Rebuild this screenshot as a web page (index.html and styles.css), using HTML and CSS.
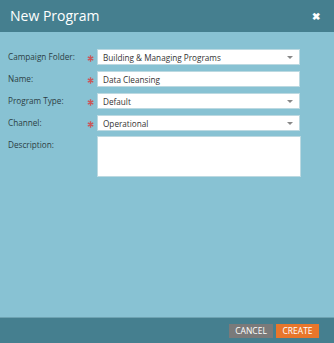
FILE: index.html
```html
<!DOCTYPE html>
<html>
<head>
<meta charset="utf-8">
<link rel="stylesheet" href="styles.css">
</head>
<body>
<div class="dialog">
  <div class="header">
    <span class="title">New Program</span>
    <span class="close">&#10006;</span>
  </div>
  <div class="body">
    <div class="form">
      <label class="label">Campaign Folder:</label>
      <span class="star"><svg width="7" height="7" viewBox="0 0 10 10"><path d="M5 0.5V9.5M1.1 2.75L8.9 7.25M1.1 7.25L8.9 2.75" stroke="#c9575a" stroke-width="2"/></svg></span>
      <div class="field select"><span>Building &amp; Managing Programs</span><span class="arrow"></span></div>

      <label class="label">Name:</label>
      <span class="star"><svg width="7" height="7" viewBox="0 0 10 10"><path d="M5 0.5V9.5M1.1 2.75L8.9 7.25M1.1 7.25L8.9 2.75" stroke="#c9575a" stroke-width="2"/></svg></span>
      <div class="field"><span>Data Cleansing</span></div>

      <label class="label">Program Type:</label>
      <span class="star"><svg width="7" height="7" viewBox="0 0 10 10"><path d="M5 0.5V9.5M1.1 2.75L8.9 7.25M1.1 7.25L8.9 2.75" stroke="#c9575a" stroke-width="2"/></svg></span>
      <div class="field select"><span>Default</span><span class="arrow"></span></div>

      <label class="label">Channel:</label>
      <span class="star"><svg width="7" height="7" viewBox="0 0 10 10"><path d="M5 0.5V9.5M1.1 2.75L8.9 7.25M1.1 7.25L8.9 2.75" stroke="#c9575a" stroke-width="2"/></svg></span>
      <div class="field select"><span>Operational</span><span class="arrow"></span></div>

      <label class="label desc-label">Description:</label>
      <span class="star empty"></span>
      <div class="field textarea"></div>
    </div>
  </div>
  <div class="footer">
    <button class="btn cancel">CANCEL</button>
    <button class="btn create">CREATE</button>
  </div>
</div>
</body>
</html>
```
FILE: styles.css
```css
html, body {
  margin: 0;
  padding: 0;
}
body {
  width: 334px;
  height: 343px;
  font-family: "Open Sans", "Liberation Sans", sans-serif;
  overflow: hidden;
}
.dialog {
  width: 334px;
  height: 343px;
  display: flex;
  flex-direction: column;
  background: #88c2d3;
}
.header {
  height: 32px;
  background: #457f8f;
  display: flex;
  align-items: center;
  justify-content: space-between;
  padding: 0 14px 0 10px;
  color: #fff;
}
.title {
  font-size: 14px;
  line-height: 16px;
}
.close {
  font-size: 10px;
  font-weight: bold;
  line-height: 10px;
}
.body {
  flex: 1;
  padding: 17px 0 0 8px;
}
.form {
  display: grid;
  grid-template-columns: 79px 10px 203px;
  grid-auto-rows: 16px;
  row-gap: 6px;
  align-items: center;
}
.label {
  font-size: 8.2px;
  color: #2c3e44;
  line-height: 16px;
}
.star {
  display: flex;
  align-items: center;
  height: 16px;
  padding-top: 2px;
  box-sizing: border-box;
}
.field {
  height: 16px;
  box-sizing: border-box;
  background: #fff;
  border: 1px solid #bcd9e1;
  display: flex;
  align-items: center;
  justify-content: space-between;
  padding: 0 6px 0 5px;
  font-size: 8.2px;
  color: #333;
}
.arrow {
  width: 0;
  height: 0;
  border-left: 3px solid transparent;
  border-right: 3px solid transparent;
  border-top: 3px solid #888;
}
.desc-label, .empty {
  align-self: start;
}
.textarea {
  grid-row: span 2;
  height: 41px;
  width: 204px;
  margin-top: -1px;
  align-self: start;
}
.footer {
  height: 26px;
  box-sizing: border-box;
  background: #457f8f;
  border-top: 1px solid #6ea3b2;
  display: flex;
  justify-content: flex-end;
  align-items: center;
  gap: 3px;
  padding: 0 15px 0 0;
}
.btn {
  height: 14px;
  border: none;
  color: #fff;
  font-family: "Open Sans", "Liberation Sans", sans-serif;
  font-size: 8.5px;
  padding: 0;
  line-height: 14px;
}
.cancel {
  width: 44px;
  background: #7a7a7a;
}
.create {
  width: 43px;
  background: #e8762b;
}
```
